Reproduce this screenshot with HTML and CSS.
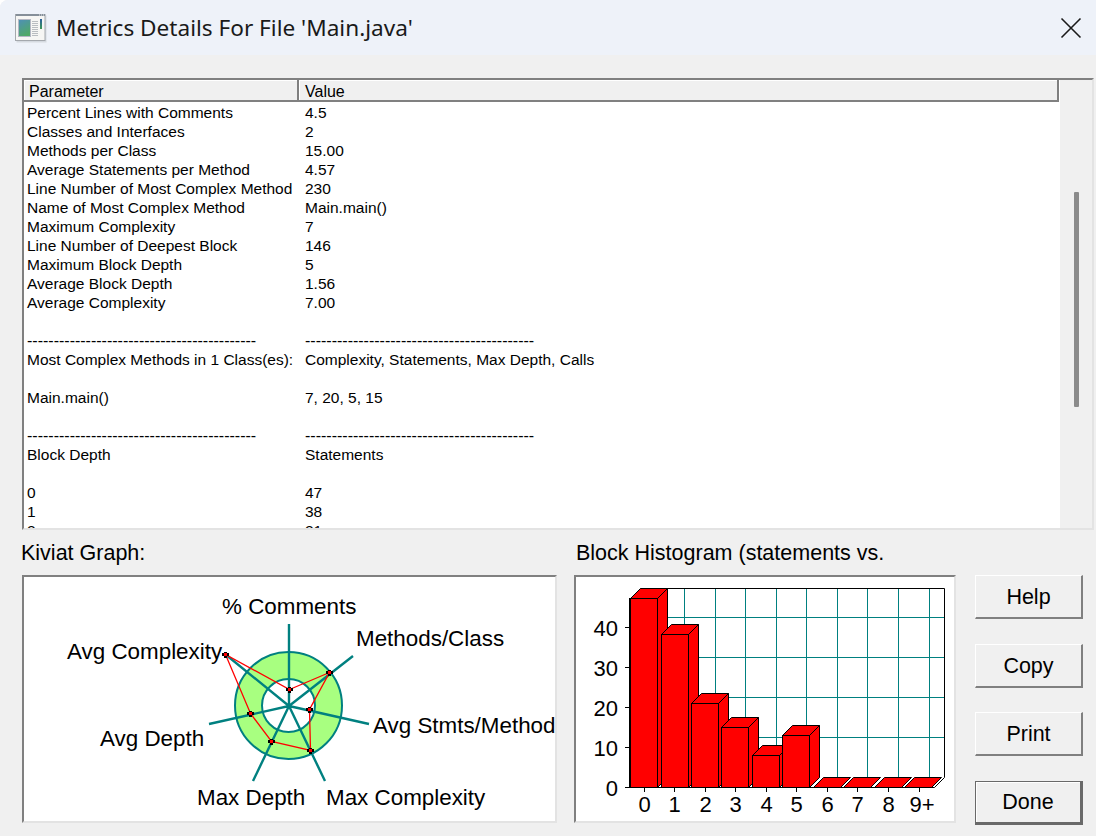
FILE: index.html
```html
<!DOCTYPE html>
<html lang="en">
<head>
<meta charset="utf-8">
<title>Metrics Details For File 'Main.java'</title>
<link rel="stylesheet" href="styles.css">
</head>
<body>
<div class="window">
  <header class="titlebar">
    <svg class="app-icon" width="32" height="30" viewBox="0 0 32 30">
      <defs>
        <linearGradient id="pane" x1="0" y1="0" x2="0.4" y2="1">
          <stop offset="0" stop-color="#4f8fb8"/>
          <stop offset="1" stop-color="#4fa968"/>
        </linearGradient>
        <linearGradient id="bar" x1="0" y1="0" x2="0" y2="1">
          <stop offset="0" stop-color="#2a5f9e"/>
          <stop offset="1" stop-color="#3f9a55"/>
        </linearGradient>
      </defs>
      <rect x="1.5" y="2.5" width="30" height="27" fill="#d5dae0"/>
      <rect x="0.5" y="1.5" width="29.5" height="26" fill="#f6f6f4" stroke="#a4a8ad"/>
      <rect x="1" y="1" width="29" height="2" fill="#858f99"/>
      <path d="M24 2h1M26 2h1M28 2h1" stroke="#e6e9ec" fill="none"/>
      <rect x="3.5" y="6.5" width="12" height="17" fill="url(#pane)" stroke="#b4b8c4"/>
      <path d="M17 8.5h6M17 10.5h6M17 12.5h6M17 14.5h6M17 16.5h6M17 18.5h6M17 20.5h6M17 22.5h6" stroke="#b9bdc1" fill="none"/>
      <rect x="25" y="6" width="2" height="10" fill="url(#bar)"/>
    </svg>
    <h1 class="title">Metrics Details For File 'Main.java'</h1>
    <svg class="close-icon" width="22" height="22" viewBox="0 0 22 22">
      <path d="M1.5 1.5L20.5 20.5M20.5 1.5L1.5 20.5"/>
    </svg>
  </header>
  <main class="content">
    <section class="table-panel">
      <div class="table-body">
        <div class="thead">
          <div class="th th-param">Parameter</div>
          <div class="th th-value">Value</div>
        </div>
        <div class="rows">
          <div class="row"><span>Percent Lines with Comments</span><span>4.5</span></div>
          <div class="row"><span>Classes and Interfaces</span><span>2</span></div>
          <div class="row"><span>Methods per Class</span><span>15.00</span></div>
          <div class="row"><span>Average Statements per Method</span><span>4.57</span></div>
          <div class="row"><span>Line Number of Most Complex Method</span><span>230</span></div>
          <div class="row"><span>Name of Most Complex Method</span><span>Main.main()</span></div>
          <div class="row"><span>Maximum Complexity</span><span>7</span></div>
          <div class="row"><span>Line Number of Deepest Block</span><span>146</span></div>
          <div class="row"><span>Maximum Block Depth</span><span>5</span></div>
          <div class="row"><span>Average Block Depth</span><span>1.56</span></div>
          <div class="row"><span>Average Complexity</span><span>7.00</span></div>
          <div class="row"><span></span><span></span></div>
          <div class="row row-dash"><span>-------------------------------------------</span><span>-------------------------------------------</span></div>
          <div class="row"><span>Most Complex Methods in 1 Class(es):</span><span>Complexity, Statements, Max Depth, Calls</span></div>
          <div class="row"><span></span><span></span></div>
          <div class="row"><span>Main.main()</span><span>7, 20, 5, 15</span></div>
          <div class="row"><span></span><span></span></div>
          <div class="row row-dash"><span>-------------------------------------------</span><span>-------------------------------------------</span></div>
          <div class="row"><span>Block Depth</span><span>Statements</span></div>
          <div class="row"><span></span><span></span></div>
          <div class="row"><span>0</span><span>47</span></div>
          <div class="row"><span>1</span><span>38</span></div>
          <div class="row"><span>2</span><span>21</span></div>
        </div>
      </div>
      <div class="scroll-track"><div class="scroll-thumb"></div></div>
    </section>
    <section class="lower">
      <div class="chart-label">Kiviat Graph:</div>
      <div class="chart-label chart-label-hist">Block Histogram (statements vs.</div>
      <div class="chart-panel">
        <svg class="chart" width="531" height="244" viewBox="24 577 531 244">
          <circle class="ring" cx="288.5" cy="705.5" r="53.5"/>
          <circle class="hole" cx="288.5" cy="705.5" r="26.5"/>
          <path class="spoke" d="M289 706L289 624M289 706L353 656M289 706L369 724M289 706L209 724M289 706L225 654M289 706L325 781M289 706L253 781"/>
          <polygon class="trace" points="289.5,689.5 329.5,672.5 309.5,709.5 310.5,750.5 271.5,741.5 250.5,713.5 225.5,654.5"/>
          <g class="markers">
            <path d="M286 689.5h7M289.5 687v6M326 672.5h7M329.5 670v6M306 709.5h7M309.5 707v6M307 750.5h7M310.5 748v6M268 741.5h7M271.5 739v6M247 713.5h7M250.5 711v6M222 654.5h7M225.5 652v6"/>
          </g>
          <g class="dots">
            <rect x="288" y="688" width="3" height="3"/><rect x="328" y="671" width="3" height="3"/><rect x="308" y="708" width="3" height="3"/><rect x="309" y="749" width="3" height="3"/><rect x="270" y="740" width="3" height="3"/><rect x="249" y="712" width="3" height="3"/><rect x="224" y="653" width="3" height="3"/>
          </g>
          <text class="lbl" x="222" y="614">% Comments</text>
          <text class="lbl" x="356" y="646">Methods/Class</text>
          <text class="lbl" x="67" y="659">Avg Complexity</text>
          <text class="lbl" x="373" y="733">Avg Stmts/Method</text>
          <text class="lbl" x="100" y="746">Avg Depth</text>
          <text class="lbl" x="197" y="805">Max Depth</text>
          <text class="lbl" x="326" y="805">Max Complexity</text>
        </svg>
      </div>
      <div class="chart-panel">
        <svg class="chart" width="378" height="244" viewBox="576 577 378 244">
          <path class="grid" d="M640.5 617.5H944M640.5 657.5H944M640.5 697.5H944M640.5 737.5H944M654.5 588V777M684.5 588V777M715.5 588V777M745.5 588V777M776.5 588V777M806.5 588V777M837.5 588V777M867.5 588V777M898.5 588V777M929.5 588V777"/>
          <path class="axis" d="M640.5 588.5H944.5V777.5L934.5 787.5H630"/>
          <path class="axis" d="M625 627.5H630M625 667.5H630M625 707.5H630M625 747.5H630M625 787.5H630M644.5 787V792M674.5 787V792M705.5 787V792M735.5 787V792M766.5 787V792M796.5 787V792M827.5 787V792M857.5 787V792M888.5 787V792M919.5 787V792"/>
          <g class="bars">
            <polygon points="630.5,598.5 640.5,588.5 667.5,588.5 657.5,598.5"/><polygon points="657.5,598.5 667.5,588.5 667.5,777.5 657.5,787.5"/><rect x="630.5" y="598.5" width="27" height="189"/>
            <polygon points="661.5,634.5 671.5,624.5 698.5,624.5 688.5,634.5"/><polygon points="688.5,634.5 698.5,624.5 698.5,777.5 688.5,787.5"/><rect x="661.5" y="634.5" width="27" height="153"/>
            <polygon points="691.5,703.5 701.5,693.5 728.5,693.5 718.5,703.5"/><polygon points="718.5,703.5 728.5,693.5 728.5,777.5 718.5,787.5"/><rect x="691.5" y="703.5" width="27" height="84"/>
            <polygon points="721.5,727.5 731.5,717.5 758.5,717.5 748.5,727.5"/><polygon points="748.5,727.5 758.5,717.5 758.5,777.5 748.5,787.5"/><rect x="721.5" y="727.5" width="27" height="60"/>
            <polygon points="752.5,755.5 762.5,745.5 789.5,745.5 779.5,755.5"/><polygon points="779.5,755.5 789.5,745.5 789.5,777.5 779.5,787.5"/><rect x="752.5" y="755.5" width="27" height="32"/>
            <polygon points="782.5,735.5 792.5,725.5 819.5,725.5 809.5,735.5"/><polygon points="809.5,735.5 819.5,725.5 819.5,777.5 809.5,787.5"/><rect x="782.5" y="735.5" width="27" height="52"/>
            <polygon points="813.5,787.5 823.5,777.5 850.5,777.5 840.5,787.5"/>
            <polygon points="843.5,787.5 853.5,777.5 880.5,777.5 870.5,787.5"/>
            <polygon points="874.5,787.5 884.5,777.5 911.5,777.5 901.5,787.5"/>
            <polygon points="904.5,787.5 914.5,777.5 941.5,777.5 931.5,787.5"/>
          </g>
          <path class="y-axis" d="M630 598V788"/>
          <g class="tick-y">
            <text x="618" y="636">40</text>
            <text x="618" y="676">30</text>
            <text x="618" y="716">20</text>
            <text x="618" y="756">10</text>
            <text x="618" y="796">0</text>
          </g>
          <g class="tick-x">
            <text x="644.5" y="812">0</text>
            <text x="674.5" y="812">1</text>
            <text x="705.5" y="812">2</text>
            <text x="735.5" y="812">3</text>
            <text x="766.5" y="812">4</text>
            <text x="796.5" y="812">5</text>
            <text x="827.5" y="812">6</text>
            <text x="857.5" y="812">7</text>
            <text x="888.5" y="812">8</text>
            <text x="922" y="812">9+</text>
          </g>
        </svg>
      </div>
      <div class="buttons">
        <button class="btn" type="button">Help</button>
        <button class="btn" type="button">Copy</button>
        <button class="btn" type="button">Print</button>
        <button class="btn btn-default" type="button">Done</button>
      </div>
    </section>
  </main>
</div>
</body>
</html>
```

FILE: styles.css
```css
* { box-sizing: border-box; }
html, body { margin: 0; padding: 0; }
body {
  width: 1096px;
  height: 836px;
  overflow: hidden;
  background: #fff;
  font-family: "Liberation Sans", Arial, sans-serif;
  color: #000;
}
.window {
  width: 1096px;
  height: 836px;
  display: flex;
  flex-direction: column;
  background: #f0f0f0;
  border-top-left-radius: 8px;
  overflow: hidden;
}
.titlebar {
  height: 55px;
  flex: none;
  display: flex;
  align-items: center;
  padding: 0 14px 0 15px;
  background: #eef2f9;
}
.app-icon { flex: none; margin-top: 1px; }
.title {
  margin: 0 0 0 9px;
  flex: 1;
  font-family: "Noto Sans", sans-serif;
  font-weight: 400;
  font-size: 22.6px;
  color: #1a1a1a;
}
.close-icon { flex: none; fill: none; stroke: #1a1a1a; stroke-width: 1.6; }
.content {
  flex: 1;
  padding: 23px 2px 0 22px;
  display: flex;
  flex-direction: column;
}
.table-panel {
  height: 452px;
  display: flex;
  border-style: solid;
  border-width: 2px;
  border-color: #808080 #e3e3e3 #e3e3e3 #808080;
  overflow: hidden;
}
.table-body {
  width: 1036px;
  flex: none;
  background: #fff;
  overflow: hidden;
}
.thead {
  width: 1035px;
  height: 22px;
  display: flex;
  background: #f0f0f0;
  font-size: 16px;
  line-height: 23px;
  border-bottom: 2px solid #808080;
  border-right: 2px solid #808080;
  box-shadow: inset 1px 1px 0 #fff;
}
.th { padding-left: 5px; }
.th-param { width: 275px; border-right: 2px solid #808080; }
.th-value { flex: 1; border-left: 1px solid #fff; padding-left: 5px; }
.rows { padding-top: 1px; }
.row {
  display: grid;
  grid-template-columns: 278px 1fr;
  height: 19px;
  padding-left: 3px;
  font-size: 15.5px;
  line-height: 19px;
  white-space: nowrap;
}
.row-dash { font-size: 16px; }
.scroll-track {
  flex: 1;
  padding: 112px 0 0 14px;
  background: #f0f0f0;
}
.scroll-thumb {
  width: 5px;
  height: 215px;
  background: #8b8b8b;
  border-radius: 1px;
}
.lower {
  display: grid;
  grid-template-columns: 535px 382px 110px;
  grid-template-rows: 45px 250px;
  column-gap: 17px;
}
.chart-label {
  font-size: 21.5px;
  line-height: 46px;
  margin-left: -1px;
}
.chart-label-hist { margin-left: 2px; grid-column: 2 / 4; white-space: nowrap; }
.chart-panel {
  height: 248px;
  background: #fff;
  border-style: solid;
  border-width: 2px;
  border-color: #808080 #e3e3e3 #e3e3e3 #808080;
}
.chart { display: block; }
.buttons {
  display: flex;
  flex-direction: column;
  justify-content: space-between;
  margin-left: 2px;
}
.btn {
  height: 44px;
  padding: 2px 0 0;
  font-family: "Liberation Sans", Arial, sans-serif;
  font-size: 21.5px;
  color: #000;
  background: #f0f0f0;
  border-style: solid;
  border-width: 1px 2px 2px 1px;
  border-color: #fff #808080 #808080 #fff;
}
.btn-default {
  border-width: 1px 3px 3px 1px;
  border-color: #696969;
  box-shadow: inset 1px 1px 0 #fff;
}
.ring { fill: #a8ff80; stroke: #008080; stroke-width: 2; }
.hole { fill: #fff; stroke: #008080; stroke-width: 2; }
.spoke { fill: none; stroke: #008080; stroke-width: 2.4; }
.trace { fill: none; stroke: #f00; stroke-width: 1.3; }
.markers path { fill: none; stroke: #000; stroke-width: 3; }
.dots rect { fill: #f00; }
.lbl { font-size: 22.4px; fill: #000; }
.grid { fill: none; stroke: #008080; stroke-width: 1; }
.axis { fill: none; stroke: #000; stroke-width: 1; }
.y-axis { fill: none; stroke: #000; stroke-width: 2; }
.bars polygon, .bars rect { fill: #f00; stroke: #000; stroke-width: 1; }
.tick-y text { font-size: 22px; text-anchor: end; }
.tick-x text { font-size: 22px; text-anchor: middle; }
```
